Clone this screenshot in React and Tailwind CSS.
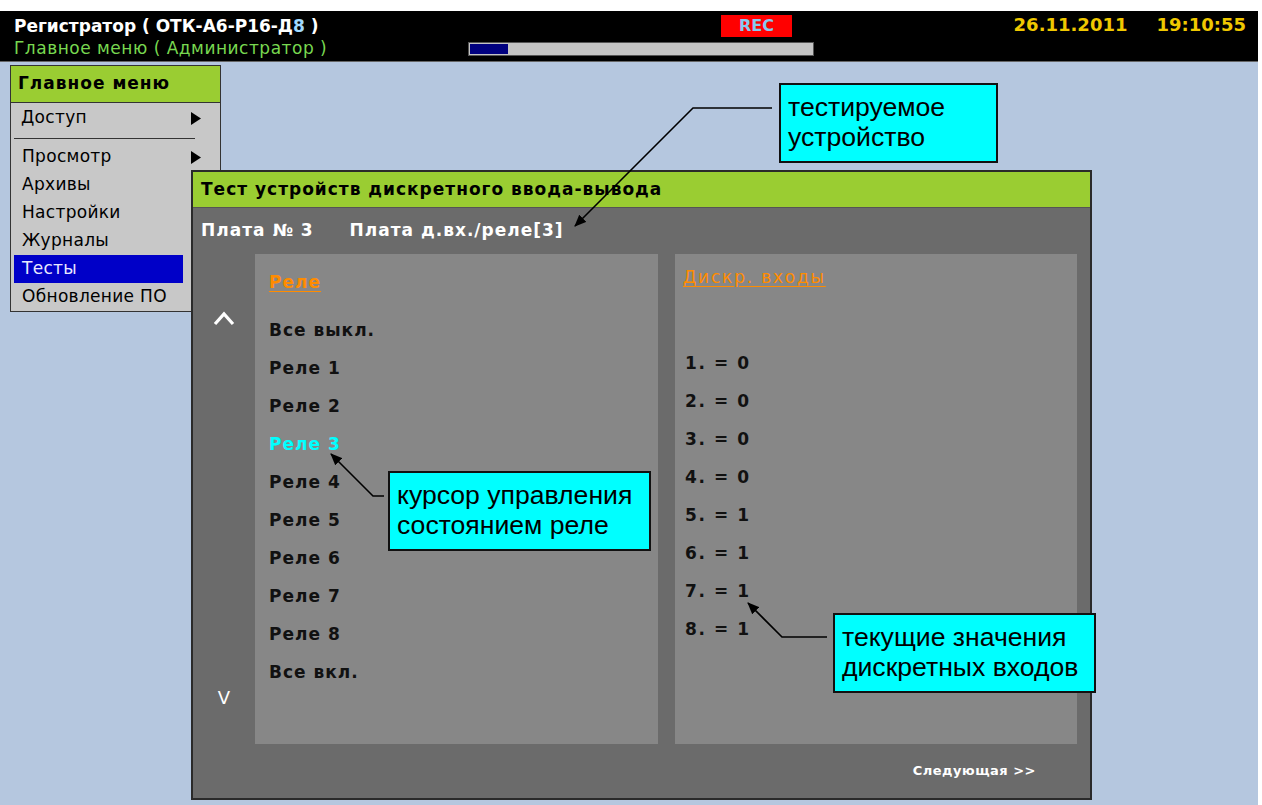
import React from 'react'

const MENU_ITEMS = [
  { label: 'Просмотр', sub: true },
  { label: 'Архивы' },
  { label: 'Настройки' },
  { label: 'Журналы' },
  { label: 'Тесты', active: true },
  { label: 'Обновление ПО' },
]

const RELAYS = ['Все выкл.', 'Реле 1', 'Реле 2', 'Реле 3', 'Реле 4', 'Реле 5', 'Реле 6', 'Реле 7', 'Реле 8', 'Все вкл.']
const INPUTS = [0, 0, 0, 0, 1, 1, 1, 1]

const UI_FONT = "font-['DejaVu_Sans',sans-serif]"
const NOTE_FONT = "font-['Liberation_Sans',Arial,sans-serif]"

function Triangle() {
  return (
    <svg width="10" height="13" viewBox="0 0 10 13" className="shrink-0">
      <path d="M0 0 L10 6.5 L0 13 Z" fill="#000" />
    </svg>
  )
}

function MainMenu() {
  return (
    <div className="absolute left-[10px] top-[3px] w-[211px] h-[247px] border border-[#333] bg-[#c8c8c8] text-[17px] tracking-[0.3px] text-black">
      <div className="h-[37px] flex items-center px-[7px] bg-[#9acd32] border-b border-[#333] font-bold tracking-[1px]">
        Главное меню
      </div>
      <div className="h-[30px] flex items-center justify-between pl-[10px] pr-[19px]">
        <span>Доступ</span>
        <Triangle />
      </div>
      <div className="mx-[3px] mt-[5px] mb-[4px] h-px w-[181px] bg-[#333]" />
      {MENU_ITEMS.map((item) => (
        <div
          key={item.label}
          className={[
            'h-[28px] flex items-center justify-between pl-[8px] pr-[19px] ml-[3px]',
            item.active ? 'bg-[#0000c8] text-[#e8e8ff] w-[169px]' : '',
          ].join(' ')}
        >
          <span>{item.label}</span>
          {item.sub ? <Triangle /> : null}
        </div>
      ))}
    </div>
  )
}

function TestDialog() {
  return (
    <div className="absolute left-[191px] top-[108px] w-[901px] h-[630px] border-2 border-[#2a2a2a] bg-[#6b6b6b] flex flex-col">
      <div className="h-[36px] shrink-0 flex items-center pl-[8px] bg-[#9acd32] border-b border-[#555] font-bold text-[17px] tracking-[1px] text-black">
        Тест устройств дискретного ввода-вывода
      </div>
      <div className="h-[46px] shrink-0 flex items-center gap-[36px] pl-[8px] text-white font-bold text-[17px] tracking-[1px]">
        <span>Плата № 3</span>
        <span>Плата д.вх./реле[3]</span>
      </div>
      <div className="flex h-[490px]">
        <div className="w-[62px] shrink-0 flex flex-col items-center justify-between pt-[56px] pb-[36px] text-white">
          <svg width="24" height="16" viewBox="0 0 24 16">
            <polyline points="3,14 12,4 21,14" fill="none" stroke="#fff" strokeWidth="3.2" strokeLinejoin="miter" />
          </svg>
          <span className="text-[18px] leading-[20px]">V</span>
        </div>
        <div className="w-[403px] shrink-0 bg-[#878787] pl-[14px] pt-[18px]">
          <div className="h-[20px] leading-[20px] font-bold text-[17px] tracking-[1px] text-[#ff8c00] underline underline-offset-[3px]">Реле</div>
          <div className="mt-[20px]">
            {RELAYS.map((r) => (
              <div key={r} className={['h-[38px] flex items-center font-bold text-[17px] tracking-[1px]', r === 'Реле 3' ? 'text-[#00ffff]' : 'text-[#111]'].join(' ')}>
                {r}
              </div>
            ))}
          </div>
        </div>
        <div className="w-[17px] shrink-0" />
        <div className="w-[402px] shrink-0 bg-[#878787] pl-[8px] pt-[13px]">
          <div className="h-[20px] leading-[20px] text-[17px] tracking-[1.8px] text-[#ff8c00] underline underline-offset-[3px]">Дискр. входы</div>
          <div className="mt-[58px] pl-[2px]">
            {INPUTS.map((v, i) => (
              <div key={i} className="h-[38px] flex items-center font-bold text-[17px] tracking-[1.6px] whitespace-pre text-[#111]">
                {`${i + 1}. = ${v}`}
              </div>
            ))}
          </div>
        </div>
      </div>
      <div className="flex-1 flex items-center justify-end pr-[54px] text-white font-bold text-[13px] tracking-[0.5px]">
        Следующая &gt;&gt;
      </div>
    </div>
  )
}

function Note({ className, lines }) {
  return (
    <div className={['absolute bg-[#00ffff] border-2 border-[#111] pl-[7px] pt-[7px] text-[26.6px] leading-[30px] text-black whitespace-nowrap', NOTE_FONT, className].join(' ')}>
      {lines.map((l) => (
        <div key={l}>{l}</div>
      ))}
    </div>
  )
}

function Leaders() {
  return (
    <svg className="absolute left-0 top-0 pointer-events-none" width="1262" height="805">
      <defs>
        <marker id="head" viewBox="0 0 12 10" refX="11" refY="5" markerWidth="12" markerHeight="10" markerUnits="userSpaceOnUse" orient="auto">
          <path d="M0 0 L12 5 L0 10 Z" fill="#000" />
        </marker>
      </defs>
      <polyline points="772,108 693,108 575,226" fill="none" stroke="#000" strokeWidth="1.6" markerEnd="url(#head)" />
      <polyline points="384,496 373,496 331,454" fill="none" stroke="#000" strokeWidth="1.6" markerEnd="url(#head)" />
      <polyline points="827,637 782,637 748,603" fill="none" stroke="#000" strokeWidth="1.6" markerEnd="url(#head)" />
    </svg>
  )
}

export default function App() {
  return (
    <div className={['relative w-[1262px] h-[805px] bg-white pt-[11px] overflow-hidden', UI_FONT].join(' ')}>
      <div className="w-[1258px] h-[50px] bg-black relative">
        <div className="absolute left-[14px] top-[4px] text-white font-bold text-[17px] leading-[22px]">
          Регистратор ( ОТК-А6-Р16-Д<span className="text-[#a0d8ff]">8</span> )
        </div>
        <div className="absolute left-[14px] top-[26px] text-[#78d850] text-[17px] tracking-[0.5px] leading-[22px]">
          Главное меню ( Администратор )
        </div>
        <div className="absolute left-[721px] top-[4px] w-[71px] h-[22px] bg-[#ff0000] flex items-center justify-center text-[#88c8f0] font-bold text-[16px]">
          REC
        </div>
        <div className="absolute left-[468px] top-[31px] w-[346px] h-[14px] bg-[#c4c4c4] border border-[#555] p-px">
          <div className="w-[38px] h-full bg-[#00007f]" />
        </div>
        <div className="absolute right-[12px] top-[2px] flex gap-[29px] text-[#f0c800] font-bold text-[18px] leading-[24px]">
          <span>26.11.2011</span>
          <span>19:10:55</span>
        </div>
      </div>
      <div className="relative w-[1258px] h-[744px] bg-[#b5c7df] border-t border-[#666]">
        <MainMenu />
        <TestDialog />
        <Note className="left-[779px] top-[21px] w-[219px] h-[80px]" lines={['тестируемое', 'устройство']} />
        <Note className="left-[388px] top-[409px] w-[263px] h-[80px]" lines={['курсор управления', 'состоянием реле']} />
        <Note className="left-[833px] top-[551px] w-[263px] h-[80px]" lines={['текущие значения', 'дискретных входов']} />
      </div>
      <Leaders />
    </div>
  )
}
